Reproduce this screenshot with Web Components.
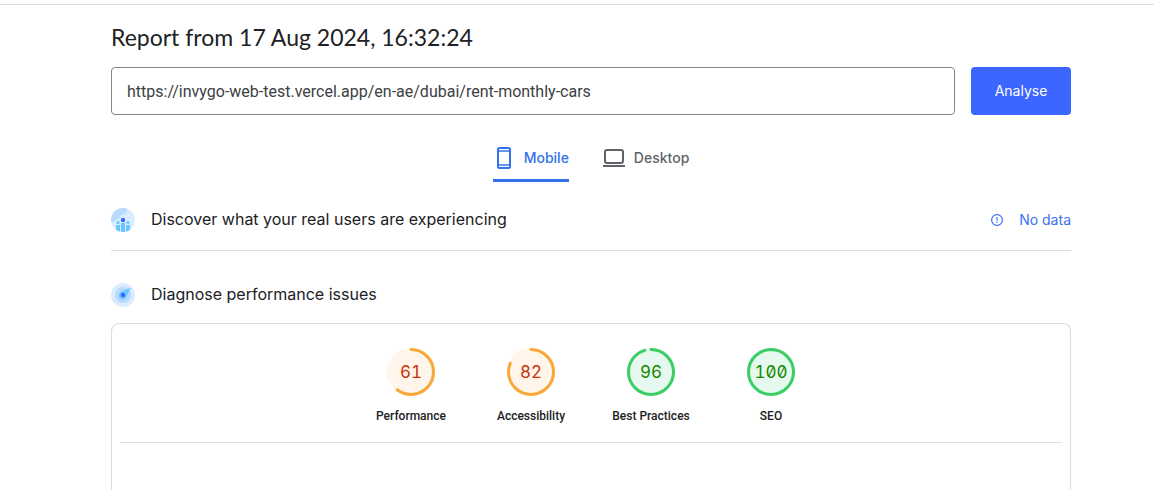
<!DOCTYPE html>
<html lang="en">
<head>
<meta charset="utf-8">
<title>PageSpeed Insights</title>
<style>
  body { margin: 0; background: #fff; color: #202124; font-family: Roboto, "Liberation Sans", sans-serif; }
</style>
</head>
<body>
<report-page>
  <analyse-form slot="form" value="https://invygo-web-test.vercel.app/en-ae/dubai/rent-monthly-cars"></analyse-form>
  <device-tabs slot="tabs"></device-tabs>
  <report-section slot="sections" divided>
    <discover-icon slot="icon"></discover-icon>
    Discover what your real users are experiencing
    <no-data slot="action">No data</no-data>
  </report-section>
  <report-section slot="sections">
    <diagnose-icon slot="icon"></diagnose-icon>
    Diagnose performance issues
  </report-section>
  <score-card>
    <score-gauge score="61">Performance</score-gauge>
    <score-gauge score="82">Accessibility</score-gauge>
    <score-gauge score="96">Best Practices</score-gauge>
    <score-gauge score="100">SEO</score-gauge>
  </score-card>
</report-page>
<script>
const define = (name, html, setup) => customElements.define(name, class extends HTMLElement {
  constructor() {
    super();
    const t = document.createElement('template');
    t.innerHTML = html;
    this.attachShadow({ mode: 'open' }).append(t.content.cloneNode(true));
  }
  connectedCallback() { if (setup) setup(this, this.shadowRoot); }
});

define('report-page', `
<style>
  :host { display: flex; flex-direction: column; min-height: 100vh; box-sizing: border-box; }
  .bar { height: 4px; border-bottom: 1px solid #dadce0; }
  main { flex: 1; display: flex; flex-direction: column; padding-left: 28px; }
  .wrap { flex: 1; display: flex; flex-direction: column; width: 100%; max-width: 960px; margin: 0 auto; }
  h1 { margin: 16px 0 14px; font: 400 23px/32px Lato, sans-serif; color: #202124; }
</style>
<div class="bar"></div>
<main><div class="wrap">
  <h1>Report from 17 Aug 2024, 16:32:24</h1>
  <slot name="form"></slot>
  <slot name="tabs"></slot>
  <slot name="sections"></slot>
  <slot></slot>
</div></main>`);

define('analyse-form', `
<style>
  :host { display: block; }
  form { display: flex; gap: 16px; margin: 0; }
  input { flex: 1; min-width: 0; height: 48px; box-sizing: border-box; padding: 0 15px; border: 1px solid #80868b; border-radius: 4px;
    background: #fff; color: #3c4043; font: 400 16px/24px Roboto, sans-serif; }
  button { width: 100px; height: 48px; padding: 0; border: 0; border-radius: 4px; background: #3b66ff; color: #fff;
    font: 400 14px/20px Inter, sans-serif; }
</style>
<form>
  <input type="url" aria-label="Enter a web page URL">
  <button type="button">Analyse</button>
</form>`, (host, root) => { root.querySelector('input').value = host.getAttribute('value'); });

define('device-tabs', `
<style>
  :host { display: block; margin-top: 20px; }
  div { display: flex; justify-content: center; gap: 34px; }
  button { display: flex; align-items: center; gap: 9px; height: 47px; padding: 2px 0 0; border: 0; border-bottom: 3px solid transparent;
    background: none; color: #5f6368; font: 500 14px/20px Inter, sans-serif; }
  button[aria-selected=true] { color: #3272ea; border-color: #3272ea; }
  svg { width: 22px; height: 24px; display: block; }
</style>
<div role="tablist">
  <button role="tab" aria-selected="true"><svg viewBox="0 0 22 24" fill="none" stroke="currentColor" stroke-width="2"><rect x="5" y="2" width="12" height="20" rx="1.5"/><path d="M5 5h12M5 19h12" stroke-width="1.5"/></svg>Mobile</button>
  <button role="tab" aria-selected="false"><svg viewBox="0 0 22 24" fill="none" stroke="currentColor" stroke-width="2"><rect x="2" y="4" width="18" height="13" rx="2"/><path d="M0 20h22"/></svg>Desktop</button>
</div>`);

define('report-section', `
<style>
  :host { display: flex; align-items: center; gap: 16px; height: 60px; margin-top: 8px; }
  :host([divided]) { border-bottom: 1px solid #dadce0; }
  :host(:not([divided])) { height: 56px; margin-top: 16px; }
  h2 { flex: 1; margin: 0; padding-bottom: 2px; font: 400 16px/24px Inter, sans-serif; color: #202124; }
</style>
<slot name="icon"></slot><h2><slot></slot></h2><slot name="action"></slot>`);

define('discover-icon', `
<style>:host { display: block; width: 24px; height: 24px; } svg { display: block; }</style>
<svg width="24" height="24" viewBox="0 0 24 24">
  <defs><clipPath id="c"><circle cx="12" cy="12" r="12"/></clipPath></defs>
  <g clip-path="url(#c)">
    <rect width="24" height="24" fill="#dcecff"/>
    <path d="M0 0h16v2l-1 3-2 1-3 1-1 3-3 1-2 2-2 1H0z" fill="#b8daff"/>
    <circle cx="7" cy="14.5" r="1.6" fill="#69c7ff"/><circle cx="17" cy="14.5" r="1.6" fill="#69c7ff"/>
    <path d="M5 17h4v7H5zM10 15h4v9h-4zM15 17h4v7h-4z" fill="#69c7ff"/>
    <circle cx="12" cy="12" r="2.2" fill="#3566ff"/>
  </g>
</svg>`);

define('diagnose-icon', `
<style>:host { display: block; width: 24px; height: 24px; } svg { display: block; }</style>
<svg width="24" height="24" viewBox="0 0 24 24">
  <circle cx="12" cy="12" r="12" fill="#dcecff"/>
  <circle cx="12" cy="12" r="8" fill="#b8daff"/>
  <path d="M19.8 4.8 15.6 13.2a4 4 0 1 1-5.4-4.7z" fill="#69c7ff"/>
  <circle cx="12" cy="12" r="2.2" fill="#3566ff"/>
</svg>`);

define('no-data', `
<style>
  :host { display: flex; align-items: center; gap: 16px; color: #3b70f5; font: 400 14px/20px Inter, sans-serif; }
  svg { display: block; }
</style>
<svg width="12" height="12" viewBox="0 0 12 12" fill="none" stroke="currentColor"><circle cx="6" cy="6" r="5.4" stroke-width="1.2"/><path d="M6 3v3.6M6 7.8V9" stroke-width="1.2"/></svg>
<span><slot></slot></span>`);

define('score-card', `
<style>
  :host { flex: 1; display: block; padding: 0 8px; border: 1px solid #dadce0; border-bottom: 0; border-radius: 8px 8px 0 0; }
  div { display: flex; justify-content: center; padding: 24px 0 16px; border-bottom: 1px solid #e0e0e0; }
</style>
<div><slot></slot></div>`);

define('score-gauge', `
<style>
  :host { display: flex; flex-direction: column; align-items: center; gap: 10px; width: 120px; --line: #f9a838; --fill: #fff5eb; --ink: #c7330a; }
  :host([data-pass]) { --line: #3bce64; --fill: #e6f9ee; --ink: #188803; }
  .dial { display: grid; place-items: center; width: 48px; height: 48px; }
  .dial > * { grid-area: 1 / 1; }
  circle { fill: var(--fill); }
  path { fill: none; stroke: var(--line); stroke-width: 3; stroke-linecap: round; }
  .n { color: var(--ink); font: 400 17px/24px Inter, sans-serif; font-feature-settings: "zero", "tnum"; }
  .label { font: 500 12px/20px Roboto, sans-serif; color: #212121; }
</style>
<div class="dial">
  <svg width="48" height="48" viewBox="0 0 48 48"><circle cx="24" cy="24" r="24"/><path d="M24 1.5a22.5 22.5 0 0 1 0 45a22.5 22.5 0 0 1 0-45" pathLength="100"/></svg>
  <span class="n"></span>
</div>
<span class="label"><slot></slot></span>`, (host, root) => {
  const score = Number(host.getAttribute('score'));
  host.toggleAttribute('data-pass', score >= 90);
  root.querySelector('.n').textContent = score;
  if (score < 100) root.querySelector('path').setAttribute('stroke-dasharray', (score - 0.5) + ' 100');
});
</script>
</body>
</html>
